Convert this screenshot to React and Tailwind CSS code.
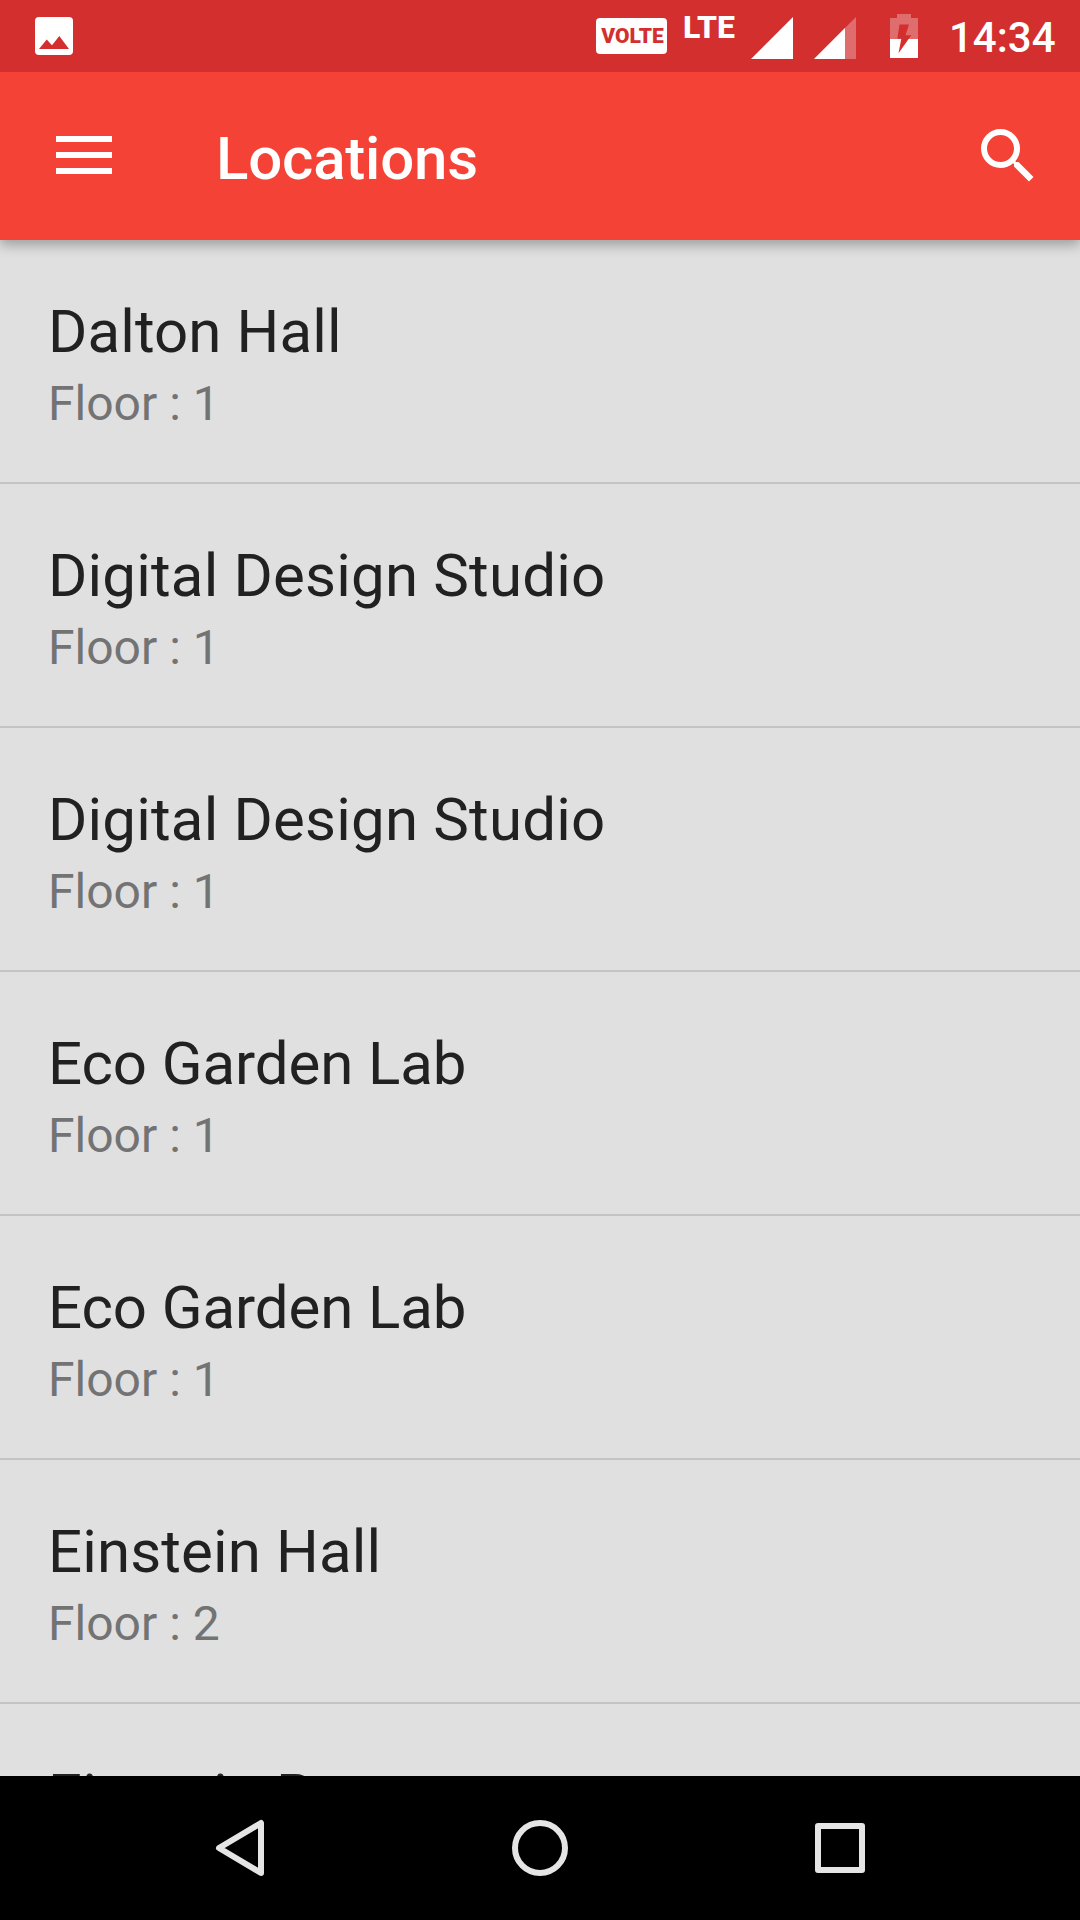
const locations = [
  { name: "Dalton Hall", floor: 1, tracking: "tracking-[0.1px]" },
  { name: "Digital Design Studio", floor: 1, tracking: "tracking-[0.19px]" },
  { name: "Digital Design Studio", floor: 1, tracking: "tracking-[0.19px]" },
  { name: "Eco Garden Lab", floor: 1, tracking: "tracking-[-0.09px]" },
  { name: "Eco Garden Lab", floor: 1, tracking: "tracking-[-0.09px]" },
  { name: "Einstein Hall", floor: 2, tracking: "tracking-[0.14px]" },
  { name: "Einstein Room", tracking: "tracking-[0.14px]" },
];

function StatusBar() {
  return (
    <div className="relative z-20 flex h-[72px] shrink-0 items-start bg-[#d32f2f] pr-6 pl-[35px] text-white">
      <svg className="mt-[17px] h-[38px] w-[38px]" viewBox="0 0 38 38">
        <rect width="38" height="38" rx="4" fill="#fff" />
        <path d="M4 32 11.7 22.5 17 28.3 24.3 19 34 32z" fill="#d32f2f" />
      </svg>
      <div className="ml-auto flex items-start">
        <div className="mt-[18px] flex h-9 w-[71px] items-center justify-center rounded bg-white pl-0.5 text-[21px] leading-none font-black text-[#d32f2f]">
          VOLTE
        </div>
        <div className="mt-[11px] ml-4 w-[68px] text-[32px] leading-8 font-extrabold">LTE</div>
        <svg className="mt-[17px] h-[42px] w-[42px]" viewBox="0 0 42 42">
          <path d="M0 42H42V0z" fill="#fff" />
        </svg>
        <svg className="mt-[17px] ml-[21px] h-[42px] w-[42px]" viewBox="0 0 42 42">
          <path d="M0 42H42V0z" fill="#fff" fillOpacity=".3" />
          <path d="M0 42H31V11z" fill="#fff" />
        </svg>
        <svg className="mt-[14px] ml-[34px] h-11 w-7" viewBox="0 0 28 44">
          <path d="M7 0H21V4H28V25H0V4H7z" fill="#fff" fillOpacity=".3" />
          <path d="M0 25H28V44H0z" fill="#fff" />
          <path d="M9.5 10.5H19L15.5 21.3H21.3L8.5 39.2 11.3 24.7H7.3z" fill="#d32f2f" />
        </svg>
        <div className="mt-[15px] ml-[31px] w-[107px] text-[42px] leading-[45px] font-medium">14:34</div>
      </div>
    </div>
  );
}

function AppBar() {
  return (
    <header className="relative z-10 flex h-[168px] shrink-0 items-center bg-[#f44336] pr-9 pl-14 text-white shadow-[0_5px_12px_rgba(0,0,0,0.3)]">
      <button aria-label="Menu" className="flex w-14 flex-col gap-2.5 pb-0.5">
        <span className="h-1.5 w-full bg-white" />
        <span className="h-1.5 w-full bg-white" />
        <span className="h-1.5 w-full bg-white" />
      </button>
      <h1 className="ml-[104px] pt-1.5 text-[60px] leading-[70px] font-medium tracking-[-0.2px]">Locations</h1>
      <button aria-label="Search" className="ml-auto">
        <svg className="h-[72px] w-[72px]" viewBox="0 0 24 24" fill="#fff">
          <path d="M15.5 14h-.79l-.28-.27A6.471 6.471 0 0 0 16 9.5 6.5 6.5 0 1 0 9.5 16c1.61 0 3.09-.59 4.23-1.57l.27.28v.79l5 4.99L20.49 19l-4.99-5zm-6 0C7.01 14 5 11.99 5 9.5S7.01 5 9.5 5 14 7.01 14 9.5 11.99 14 9.5 14z" />
        </svg>
      </button>
    </header>
  );
}

function NavigationBar() {
  return (
    <nav className="flex h-36 shrink-0 items-center justify-between bg-black px-[210px]">
      <svg className="h-[60px] w-[60px]" viewBox="0 0 60 60" fill="none" stroke="#e5e5e5" strokeWidth="6" strokeLinejoin="round">
        <path d="M9 30 51 5V55z" />
      </svg>
      <svg className="h-[60px] w-[60px]" viewBox="0 0 60 60" fill="none" stroke="#e5e5e5" strokeWidth="6">
        <circle cx="30" cy="30" r="25" />
      </svg>
      <svg className="h-[60px] w-[60px]" viewBox="0 0 60 60" fill="none" stroke="#e5e5e5" strokeWidth="6" strokeLinejoin="round">
        <rect x="8" y="8" width="44" height="44" />
      </svg>
    </nav>
  );
}

export default function App() {
  return (
    <div className="flex h-[1920px] w-[1080px] flex-col overflow-hidden bg-[#e0e0e0] font-['Roboto',sans-serif]">
      <StatusBar />
      <AppBar />
      <ul className="min-h-0 flex-1 overflow-hidden">
        {locations.map((location, i) => (
          <li key={i} className="h-[244px] border-b-2 border-[#c4c4c4] px-12 pt-[57px]">
            <div className={`text-[60px] leading-[70px] text-[#212121] ${location.tracking}`}>{location.name}</div>
            {location.floor && (
              <div className="mt-[9px] text-[48px] leading-[56px] text-[#737373]">Floor : {location.floor}</div>
            )}
          </li>
        ))}
      </ul>
      <NavigationBar />
    </div>
  );
}
